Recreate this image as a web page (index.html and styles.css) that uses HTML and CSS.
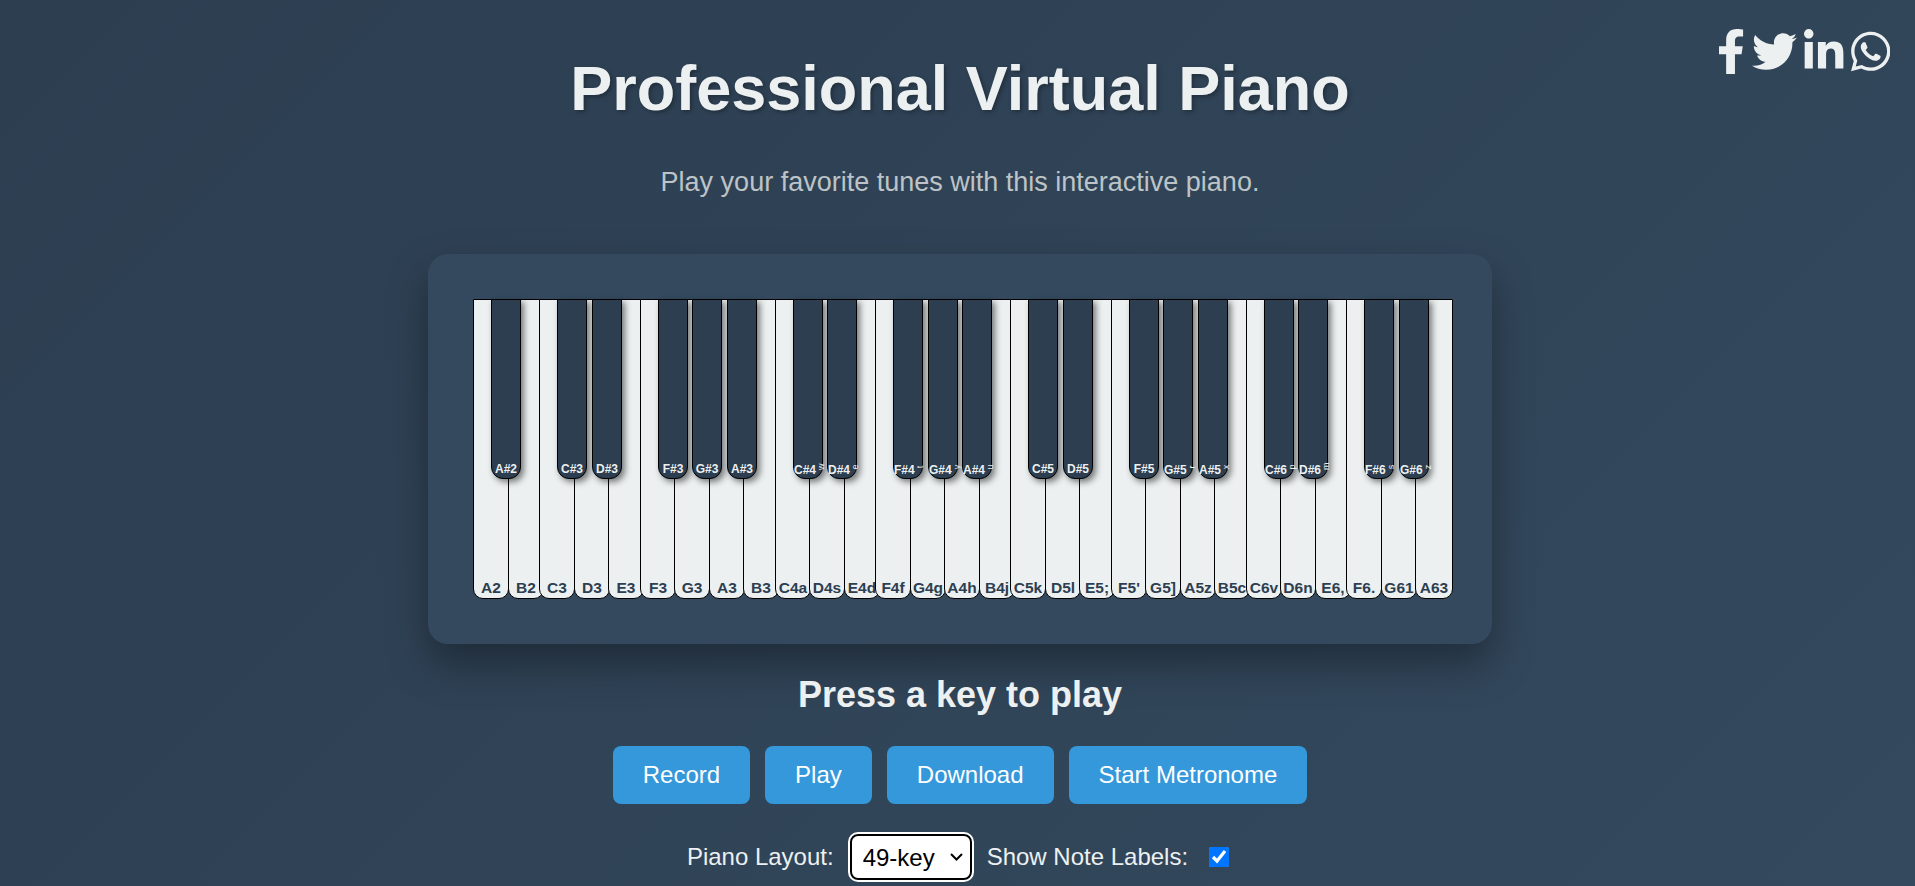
FILE: index.html
```html
<!DOCTYPE html>
<html lang="en">
<head>
    <meta charset="UTF-8">
    <meta name="viewport" content="width=device-width, initial-scale=1.0">
    <title>Professional Virtual Piano</title>
    <link rel="stylesheet" href="styles.css">
</head>
<body>
    <div class="social-links">
        <a href="#" class="social-icon" aria-label="Facebook"><svg class="icon-f" viewBox="0 0 320 512"><path d="M279.14 288l14.22-92.66h-88.91v-60.13c0-25.35 12.42-50.06 52.24-50.06h40.42V6.26S260.43 0 225.36 0c-73.22 0-121.08 44.38-121.08 124.72v70.62H22.89V288h81.39v224h100.17V288z"/></svg></a>
        <a href="#" class="social-icon" aria-label="Twitter"><svg class="icon-t" viewBox="0 0 512 512"><path d="M459.37 151.716c.325 4.548.325 9.097.325 13.645 0 138.72-105.583 298.558-298.558 298.558-59.452 0-114.68-17.219-161.137-47.106 8.447.974 16.568 1.299 25.34 1.299 49.055 0 94.213-16.568 130.274-44.832-46.132-.975-84.792-31.188-98.112-72.772 6.498.974 12.995 1.624 19.818 1.624 9.421 0 18.843-1.3 27.614-3.573-48.081-9.747-84.143-51.98-84.143-102.985v-1.299c13.969 7.797 30.214 12.67 47.431 13.319-28.264-18.843-46.781-51.005-46.781-87.391 0-19.492 5.197-37.36 14.294-52.954 51.655 63.675 129.3 105.258 216.365 109.807-1.624-7.797-2.599-15.918-2.599-24.04 0-57.828 46.782-104.934 104.934-104.934 30.213 0 57.502 12.67 76.67 33.137 23.715-4.548 46.456-13.645 66.599-25.34-7.798 24.366-24.366 44.833-46.132 57.827 21.117-2.273 41.584-8.122 60.426-16.243-14.292 20.791-32.161 39.308-52.628 54.253z"/></svg></a>
        <a href="#" class="social-icon" aria-label="LinkedIn"><svg class="icon-l" viewBox="0 0 448 512"><path d="M100.28 448H7.4V148.9h92.88zM53.79 108.1C24.09 108.1 0 83.5 0 53.8a53.79 53.79 0 0 1 107.58 0c0 29.7-24.1 54.3-53.79 54.3zM447.9 448h-92.68V302.4c0-34.7-.7-79.2-48.29-79.2-48.29 0-55.69 37.7-55.69 76.7V448h-92.78V148.9h89.08v40.8h1.3c12.4-23.5 42.69-48.3 87.88-48.3 94 0 111.28 61.9 111.28 142.3V448z"/></svg></a>
        <a href="#" class="social-icon" aria-label="WhatsApp"><svg class="icon-l" viewBox="0 0 448 512"><path d="M380.9 97.1C339 55.1 283.2 32 223.9 32c-122.4 0-222 99.6-222 222 0 39.1 10.2 77.3 29.6 111L0 480l117.7-30.9c32.4 17.7 68.9 27 106.1 27h.1c122.3 0 224.1-99.6 224.1-222 0-59.3-25.2-115-67.1-157zm-157 341.6c-33.2 0-65.7-8.9-94-25.7l-6.7-4-69.8 18.3L72 359.2l-4.4-7c-18.5-29.4-28.2-63.3-28.2-98.2 0-101.7 82.8-184.5 184.6-184.5 49.3 0 95.6 19.2 130.4 54.1 34.8 34.9 56.2 81.2 56.1 130.5 0 101.8-84.9 184.6-186.6 184.6zm101.2-138.2c-5.5-2.8-32.8-16.2-37.9-18-5.1-1.9-8.8-2.8-12.5 2.8-3.7 5.6-14.3 18-17.6 21.8-3.2 3.7-6.5 4.2-12 1.4-32.6-16.3-54-29.1-75.5-66-5.7-9.8 5.7-9.1 16.3-30.3 1.8-3.7.9-6.9-.5-9.7-1.4-2.8-12.5-30.1-17.1-41.2-4.5-10.8-9.1-9.3-12.5-9.5-3.2-.2-6.9-.2-10.6-.2-3.7 0-9.7 1.4-14.8 6.9-5.1 5.6-19.4 19-19.4 46.3 0 27.3 19.9 53.7 22.6 57.4 2.8 3.7 39.1 59.7 94.8 83.8 35.2 15.2 49 16.5 66.6 13.9 10.7-1.6 32.8-13.4 37.4-26.4 4.6-13 4.6-24.1 3.2-26.4-1.3-2.5-5-3.9-10.5-6.6z"/></svg></a>
    </div>

    <h1>Professional Virtual Piano</h1>
    <p class="subtitle">Play your favorite tunes with this interactive piano.</p>

    <div class="piano-panel">
        <div class="piano">
            <div class="white-key" style="margin-right:-1px">A2</div>
            <div class="white-key" style="margin-right:-5px">B2</div>
            <div class="white-key" style="margin-right:-1px">C3</div>
            <div class="white-key" style="margin-right:-2px">D3</div>
            <div class="white-key" style="margin-right:-4px">E3</div>
            <div class="white-key" style="margin-right:-2px">F3</div>
            <div class="white-key" style="margin-right:-1px">G3</div>
            <div class="white-key" style="margin-right:-2px">A3</div>
            <div class="white-key" style="margin-right:-4px">B3</div>
            <div class="white-key" style="margin-right:-2px">C4a</div>
            <div class="white-key" style="margin-right:-1px">D4s</div>
            <div class="white-key" style="margin-right:-5px">E4d</div>
            <div class="white-key" style="margin-right:-1px">F4f</div>
            <div class="white-key" style="margin-right:-2px">G4g</div>
            <div class="white-key" style="margin-right:-1px">A4h</div>
            <div class="white-key" style="margin-right:-5px">B4j</div>
            <div class="white-key" style="margin-right:-1px">C5k</div>
            <div class="white-key" style="margin-right:-2px">D5l</div>
            <div class="white-key" style="margin-right:-4px">E5;</div>
            <div class="white-key" style="margin-right:-2px">F5'</div>
            <div class="white-key" style="margin-right:-1px">G5]</div>
            <div class="white-key" style="margin-right:-2px">A5z</div>
            <div class="white-key" style="margin-right:-4px">B5c</div>
            <div class="white-key" style="margin-right:-2px">C6v</div>
            <div class="white-key" style="margin-right:-1px">D6n</div>
            <div class="white-key" style="margin-right:-5px">E6,</div>
            <div class="white-key" style="margin-right:-1px">F6.</div>
            <div class="white-key" style="margin-right:-2px">G61</div>
            <div class="white-key last-key">A63</div>

            <div class="black-key" style="left:18px">A#2</div>
            <div class="black-key" style="left:84px">C#3</div>
            <div class="black-key" style="left:119px">D#3</div>
            <div class="black-key" style="left:185px">F#3</div>
            <div class="black-key" style="left:219px">G#3</div>
            <div class="black-key" style="left:254px">A#3</div>
            <div class="black-key" style="left:320px">C#4<span class="hint">w</span></div>
            <div class="black-key" style="left:354px">D#4<span class="hint">e</span></div>
            <div class="black-key" style="left:420px">F#4<span class="hint">t</span></div>
            <div class="black-key" style="left:455px">G#4<span class="hint">y</span></div>
            <div class="black-key" style="left:489px">A#4<span class="hint">u</span></div>
            <div class="black-key" style="left:555px">C#5</div>
            <div class="black-key" style="left:590px">D#5</div>
            <div class="black-key" style="left:656px">F#5</div>
            <div class="black-key" style="left:690px">G#5<span class="hint">r</span></div>
            <div class="black-key" style="left:725px">A#5<span class="hint">x</span></div>
            <div class="black-key" style="left:791px">C#6<span class="hint">p</span></div>
            <div class="black-key" style="left:825px">D#6<span class="hint">m</span></div>
            <div class="black-key" style="left:891px">F#6<span class="hint">s</span></div>
            <div class="black-key" style="left:926px">G#6<span class="hint">z</span></div>
        </div>
    </div>

    <h2 class="status">Press a key to play</h2>

    <div class="actions">
        <button type="button" class="action-button">Record</button>
        <button type="button" class="action-button">Play</button>
        <button type="button" class="action-button">Download</button>
        <button type="button" class="action-button">Start Metronome</button>
    </div>

    <div class="controls">
        <label for="layout-select">Piano Layout:</label>
        <select id="layout-select" class="layout-select">
            <option>49-key</option>
            <option>61-key</option>
            <option>88-key</option>
        </select>
        <label for="labels-toggle" class="labels-label">Show Note Labels:</label>
        <input type="checkbox" id="labels-toggle" class="labels-toggle" checked>
    </div>
</body>
</html>
```

FILE: styles.css
```css
html {
    overflow: hidden;
}

body {
    position: relative;
    width: 1920px;
    height: 886px;
    margin: 0;
    padding-top: 52px;
    box-sizing: border-box;
    overflow: hidden;
    font-family: "Liberation Sans", Arial, sans-serif;
    color: #ecf0f1;
    text-align: center;
    background: linear-gradient(135deg, #2c3e50, #34495e);
}

/* Social links sit over the header corner */
.social-links {
    position: absolute;
    top: 29px;
    right: 30px;
    display: flex;
    gap: 7px;
}

.social-icon {
    display: block;
    height: 45px;
}

.social-icon svg {
    display: block;
    height: 45px;
    fill: #ecf0f1;
}

.icon-f {
    width: 28.1px;
}

.icon-t {
    width: 45px;
}

.icon-l {
    width: 39.4px;
}

h1 {
    margin: 0;
    font-size: 63px;
    font-weight: 700;
    text-shadow: 2px 2px 4px rgba(0, 0, 0, 0.3);
}

.subtitle {
    margin: 43px 0 0;
    font-size: 27px;
    color: #bdc3c7;
}

.piano-panel {
    width: 1064px;
    height: 390px;
    margin: 56px auto 0;
    padding: 45px 40px 45px 45px;
    box-sizing: border-box;
    background-color: #34495e;
    border-radius: 20px;
    box-shadow: 0 20px 40px rgba(0, 0, 0, 0.35);
}

.piano {
    position: relative;
    display: flex;
    height: 300px;
}

.white-key {
    flex: none;
    display: flex;
    align-items: flex-end;
    justify-content: center;
    width: 36px;
    height: 300px;
    padding-bottom: 1px;
    box-sizing: border-box;
    background-color: #ecf0f1;
    border: 1px solid #000;
    border-radius: 0 0 10px 10px;
    font-size: 15.5px;
    font-weight: 700;
    color: #2c3e50;
    white-space: nowrap;
}

.last-key {
    width: 38px;
}

.black-key {
    position: absolute;
    top: 0;
    display: block;
    width: 30px;
    height: 180px;
    padding-top: 163px;
    box-sizing: border-box;
    background-color: #2c3e50;
    border: 1px solid #000;
    border-radius: 0 0 12px 12px;
    box-shadow: 3px 3px 6px rgba(0, 0, 0, 0.5);
    font-size: 12px;
    font-weight: 700;
    line-height: 13px;
    text-align: center;
    color: #ecf0f1;
    white-space: nowrap;
}

.hint {
    display: inline-block;
    width: 6px;
    margin-left: 2px;
    font-size: 9px;
    font-weight: 400;
    line-height: 8px;
    vertical-align: 4px;
    transform: rotate(-90deg);
}

.status {
    margin: 30px 0 0;
    font-size: 36px;
    font-weight: 700;
}

.actions {
    display: flex;
    justify-content: center;
    gap: 15px;
    margin-top: 30px;
}

.action-button {
    padding: 15px 30px;
    border: none;
    border-radius: 8px;
    background-color: #3498db;
    color: #fff;
    font-family: inherit;
    font-size: 24px;
    cursor: pointer;
}

.controls {
    display: flex;
    align-items: center;
    justify-content: center;
    gap: 16px;
    margin-top: 30px;
    margin-left: -4px;
    font-size: 24px;
}

.layout-select {
    appearance: none;
    width: 122px;
    height: 46px;
    padding: 0 8px 0 11px;
    box-sizing: border-box;
    background: #fff url("data:image/svg+xml,%3Csvg xmlns='http://www.w3.org/2000/svg' width='13' height='8' viewBox='0 0 13 8'%3E%3Cpath d='M1 1l5.5 5.5L12 1' fill='none' stroke='%23000' stroke-width='2'/%3E%3C/svg%3E") no-repeat right 7px center;
    color: #000;
    border: 2px solid #000;
    border-radius: 8px;
    outline: 2px solid #fff;
    font-family: inherit;
    font-size: 24px;
}

.labels-label {
    margin-left: -1px;
    margin-right: 5px;
}

.labels-toggle {
    width: 20px;
    height: 20px;
    margin: 0;
}
```
